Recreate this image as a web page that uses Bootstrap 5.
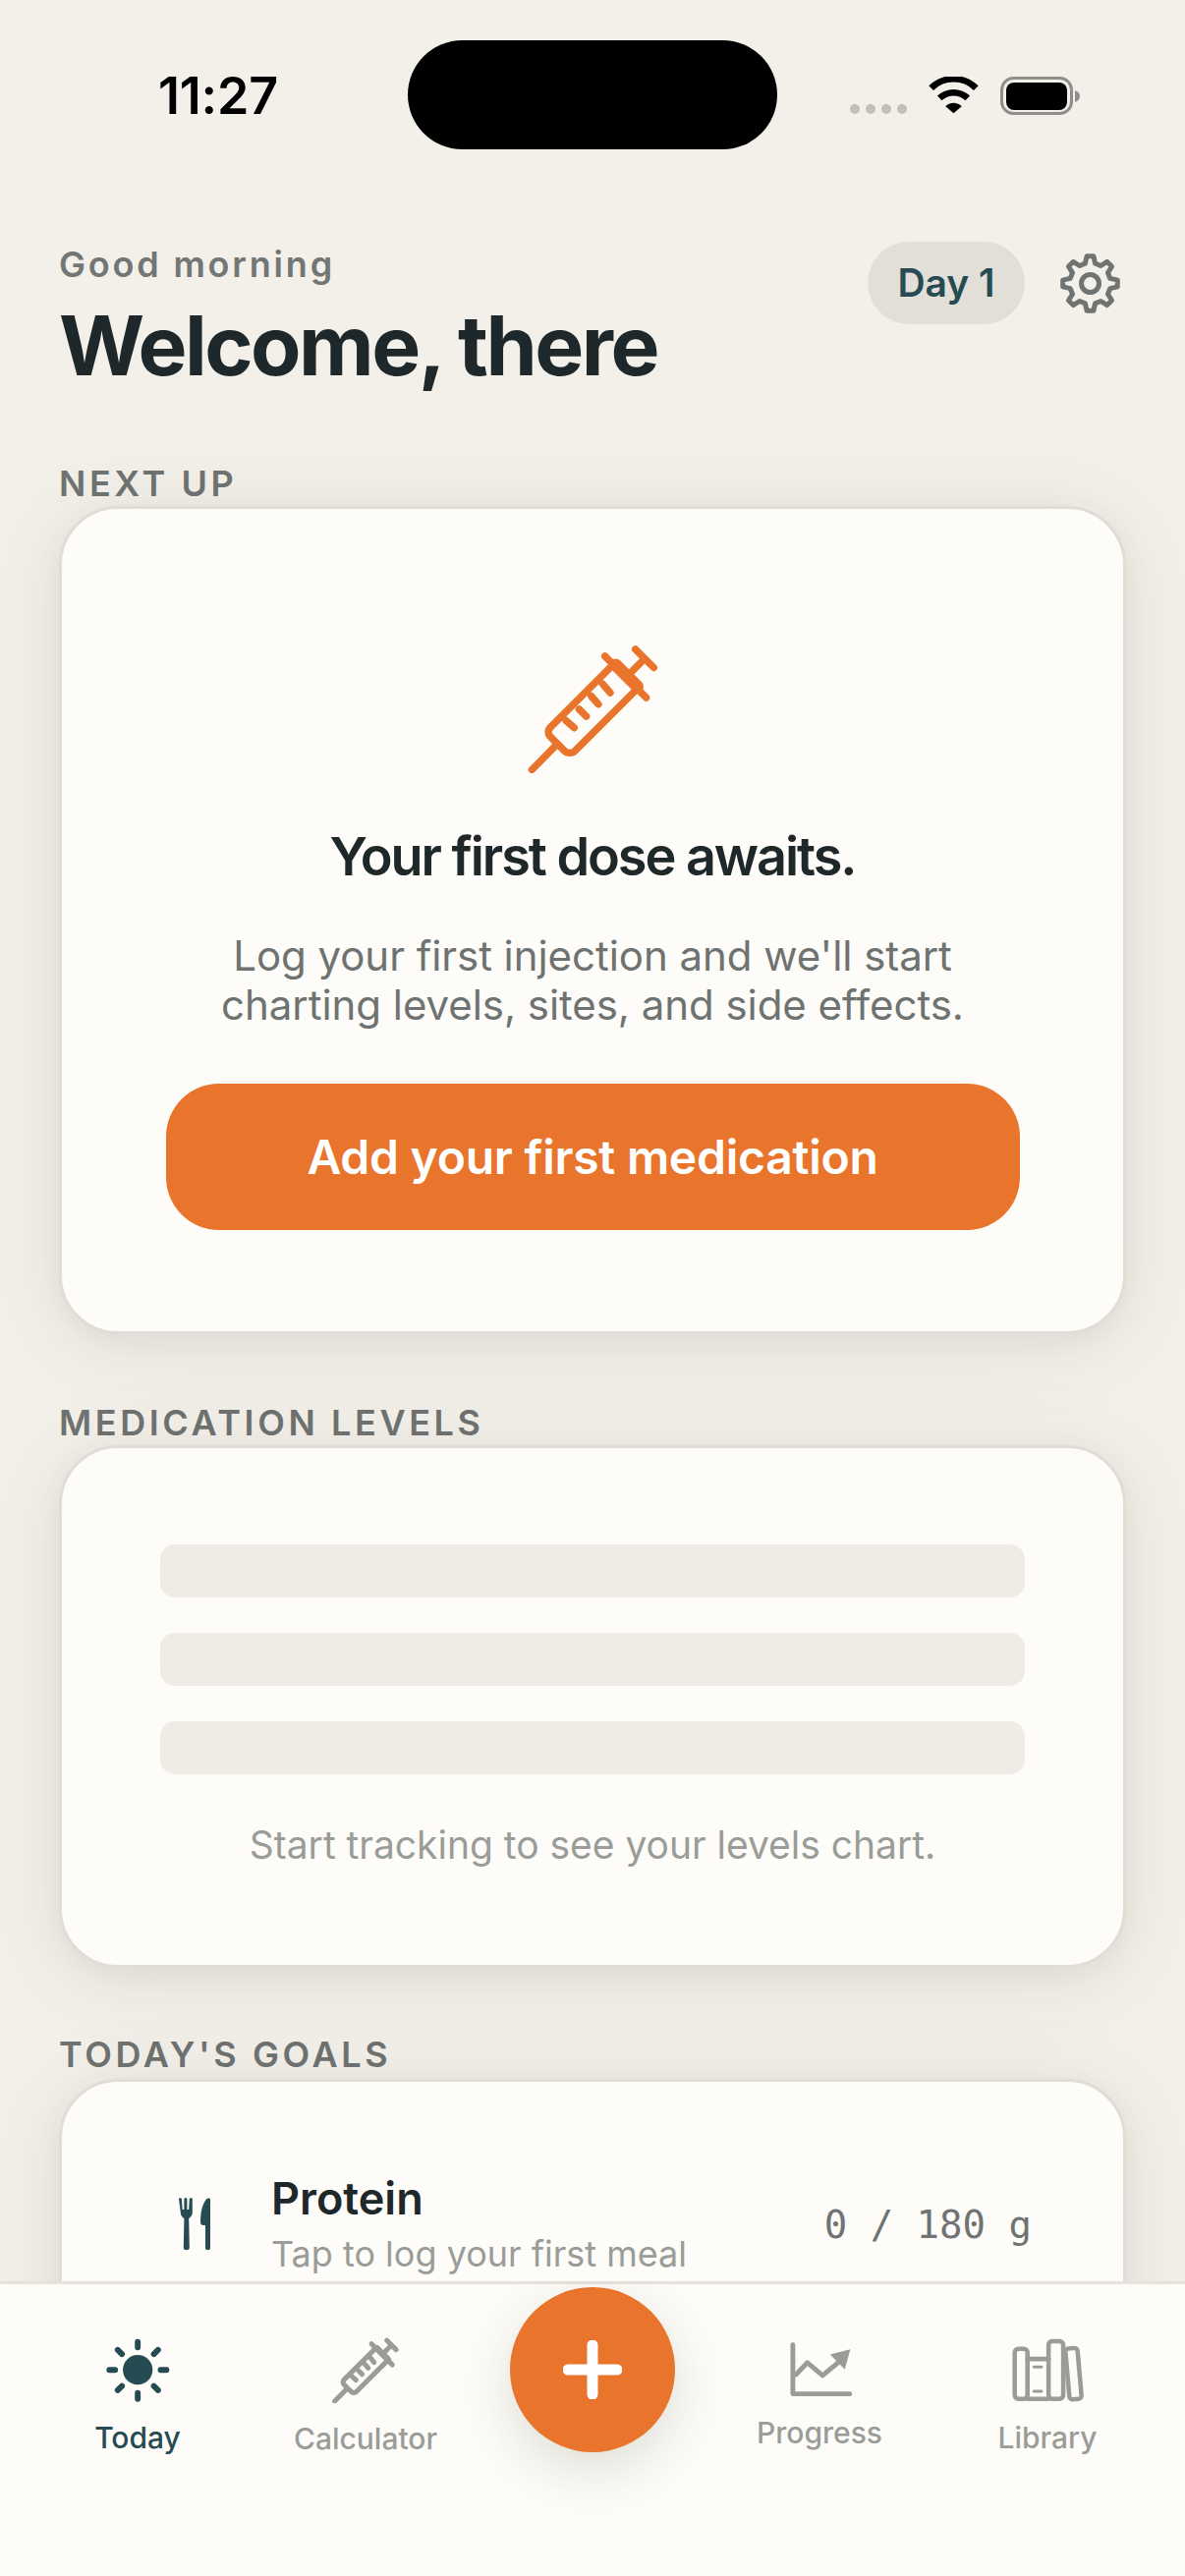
<!DOCTYPE html>
<html lang="en"><head><meta charset="utf-8"><title>Today</title>
<link href="https://cdn.jsdelivr.net/npm/bootstrap@5.3.0/dist/css/bootstrap.min.css" rel="stylesheet">
<script src="https://cdn.jsdelivr.net/npm/bootstrap@5.3.0/dist/js/bootstrap.bundle.min.js"></script>
<style>
html,body{margin:0;background:#f3f0ea;}
body{font-family:Inter,"Liberation Sans",sans-serif;color:#1e2729;}
.shell{width:1206px;height:2622px;overflow:hidden;}
.scroller{height:2322px;overflow:hidden;flex:none;}
.status{height:240px;padding:41px 106px 0 161px;}
.clock{font-size:52px;font-weight:600;line-height:60px;color:#000;margin-top:27px;width:254px;letter-spacing:-.2px;}
.island{width:376px;height:111px;border-radius:56px;background:#000;}
.sig{display:flex;gap:6px;margin:65px 22px 0 74px;}
.sig i{width:10px;height:10px;border-radius:50%;background:#c0c0ba;display:block;}
.wifi{margin:37px 22px 0 0;display:block;}
.batt{margin:37px 0 0 0;}
.head{padding:0 65px 0 60px;height:230px;}
.hello{font-size:36px;line-height:44px;font-weight:600;letter-spacing:.078em;color:#727674;margin-top:7px;}
.title{font-size:84px;line-height:100px;font-weight:700;letter-spacing:-.03em;color:#1e2729;margin:11px 0 0;}
.daypill{height:84px;width:160px;border-radius:42px;background:#e2dfd9;color:#264b52;font-size:39px;font-weight:600;margin-top:6px;}
.gear{margin:17px 0 0 35px;}
.seclabel{font-size:36px;line-height:44px;font-weight:600;letter-spacing:.1em;color:#6f7371;margin:0 60px 1px 60px;}
.seclabel.gap1{margin-top:68px;}
.seclabel.gap2{margin-top:66px;margin-bottom:3px;}
.tile{margin:0 60px;background:#fdfcf8;border:3px solid #e0ddd6;border-radius:60px;box-shadow:0 6px 24px rgba(70,60,35,.05),0 10px 84px rgba(70,60,35,.1);}
.nextcard{height:843px;padding-top:137px;}
.hero{color:#e9742b;stroke-width:22;}
.doseh{font-size:54px;line-height:64px;font-weight:600;letter-spacing:-.038em;margin:53px 0 0;color:#1e2729;}
.dosep{font-size:42px;line-height:50px;letter-spacing:-.05px;color:#6e7270;margin:44px 0 0;}
.cta{display:block;width:869px;height:149px;margin:55px auto 0;border:0;border-radius:54px;background:#e9742b;color:#fff;font-size:48px;font-weight:600;letter-spacing:-.25px;}
.cta:hover{background:#e9742b;color:#fff;}
.levelcard{height:532px;padding:98px 100px 0;}
.skel{height:54px;border-radius:15px;background:#efece5;margin-bottom:36px;}
.levelnote{font-size:39px;line-height:48px;color:#9a9c98;margin:12px 0 0;letter-spacing:-.02px;}
.goalcard{height:400px;padding:92px 93px 0 0;}
.fork{margin-left:119px;width:32px;}
.gname{font-size:45px;line-height:54px;font-weight:600;color:#1e2729;}
.gsub{font-size:36px;line-height:44px;color:#9a9c98;margin-top:7px;}
.gval{font-family:"DejaVu Sans Mono",monospace;font-size:39px;line-height:50px;color:#6f7371;margin-top:2px;}
.tabbar{height:300px;background:#fdfcf8;border-top:3px solid #e6e3dc;}
.tabitem{width:232px;padding-top:52px;height:178px;font-size:30px;line-height:40px;font-weight:500;color:#9a9c98;}
.tabitem.on{color:#264b52;}
.fab{width:168px;height:168px;border-radius:50%;border:0;background:#e9742b;margin:3px 0 0;box-shadow:0 18px 54px rgba(70,60,35,.16);padding:0;flex:none;}
.calc{color:#9a9c98;stroke-width:30;}
</style></head><body>
<svg width="0" height="0" class="d-block" aria-hidden="true"><defs>
<symbol id="syr" viewBox="165 105 405 395">
<g fill="none" stroke="currentColor" stroke-linecap="round" stroke-linejoin="round">
<path d="M181 490 250 420"/>
<path d="M430 168 238 360c-9 9-9 21 0 30l42 42c9 9 24 9 33 0L500 245"/>
<path d="M404 143 530 270"/>
<path d="M437 170 503 236" stroke-width="38"/>
<path d="M488 188 525 151M497 122 553 178"/>
<path d="M285 340 310 362M325 305 347 327M362 265 384 290M397 228 420 255"/>
</g></symbol></defs></svg>
<div class="shell d-flex flex-column">
<div class="scroller">
  <div class="status d-flex align-items-start">
    <div class="clock">11:27</div>
    <div class="island"></div>
    <div class="sig"><i></i><i></i><i></i><i></i></div>
    <svg class="wifi" width="51" height="39" viewBox="315 85 154 117"><path d="M323 120A98 98 0 0 1 461 120" fill="none" stroke="#000" stroke-width="20"/><path d="M349 151A62 62 0 0 1 435 151" fill="none" stroke="#000" stroke-width="20"/><path d="M392 197 367 176A34 34 0 0 1 417 176Z" fill="#000"/></svg>
    <svg class="batt" width="82" height="40" viewBox="0 0 82 40"><rect x="1.5" y="1.5" width="71" height="36" rx="12" fill="none" stroke="#8e8e8c" stroke-width="3"/><rect x="6" y="6" width="62" height="28" rx="8" fill="#000"/><path d="M76 14c3 1 5 3 5 6s-2 5-5 6z" fill="#8e8e8c"/></svg>
  </div>
  <div class="head d-flex justify-content-between align-items-start">
    <div><div class="hello">Good morning</div><h1 class="title">Welcome, there</h1></div>
    <div class="d-flex align-items-start">
      <div class="daypill d-flex align-items-center justify-content-center">Day 1</div>
      <svg class="gear" width="63" height="63" viewBox="-31.5 -31.5 63 63"><g fill="none" stroke="#6f7371" stroke-width="5" stroke-linejoin="round"><path d="M-3.41-27.79 3.41-27.79 5.08-20.38 10.82-18 17.24-22.06 22.06-17.24 18-10.82 20.38-5.08 27.79-3.41 27.79 3.41 20.38 5.08 18 10.82 22.06 17.24 17.24 22.06 10.82 18 5.08 20.38 3.41 27.79-3.41 27.79-5.08 20.38-10.82 18-17.24 22.06-22.06 17.24-18 10.82-20.38 5.08-27.79 3.41-27.79-3.41-20.38-5.08-18-10.82-22.06-17.24-17.24-22.06-10.82-18-5.08-20.38Z"/><circle r="9"/></g></svg>
    </div>
  </div>
  <div class="seclabel">NEXT UP</div>
  <div class="tile card text-center nextcard">
    <svg class="hero mx-auto d-block" width="135" height="132"><use href="#syr"/></svg>
    <h2 class="doseh">Your first dose awaits.</h2>
    <p class="dosep">Log your first injection and we'll start<br>charting levels, sites, and side effects.</p>
    <button class="btn cta" type="button">Add your first medication</button>
  </div>
  <div class="seclabel gap1">MEDICATION LEVELS</div>
  <div class="tile card levelcard text-center">
    <div class="skel"></div><div class="skel"></div><div class="skel"></div>
    <p class="levelnote">Start tracking to see your levels chart.</p>
  </div>
  <div class="seclabel gap2">TODAY'S GOALS</div>
  <div class="tile card goalcard">
    <div class="d-flex align-items-center">
      <svg class="fork" width="32" height="54" viewBox="0 0 32 54"><g fill="#264b52"><path d="M0 1c0-1 2.400-1 2.400 0L3 12h1.500V1c0-1 2.500-1 2.500 0v11h1.500L9 1c0-1 2.500-1 2.500 0V15c0 3-1.500 5-3 6l.5 30c0 3-5 3-5 0l.5-30c-1.500-1-3-3-3-6Z" transform="scale(1.2 1)"/><path d="M32 2c0-2-2.500-2-4-.5C24 6 22 15 22 24c0 3 1 4 3 4h2v23c0 3 5 3 5 0Z"/></g></svg>
      <div class="flex-grow-1" style="margin-left:62px"><div class="gname">Protein</div><div class="gsub">Tap to log your first meal</div></div>
      <div class="gval">0 / 180 g</div>
    </div>
  </div>
</div>
<nav class="tabbar d-flex align-items-start justify-content-between">
  <div class="d-flex ps-4">
  <div class="tabitem on d-flex flex-column align-items-center justify-content-center gap-3">
    <svg width="65" height="65" viewBox="140 118 198 198"><circle cx="238" cy="216" r="46" fill="#264b52"/><g stroke="#264b52" stroke-width="18" stroke-linecap="round"><path d="M238 129v17M238 288v18M150 216h18M309 216h18M176 154l13 13M301 154l-13 13M176 279l13-13M301 279l-13-13"/></g></svg>
    <span>Today</span></div>
  <div class="tabitem d-flex flex-column align-items-center justify-content-center gap-3">
    <svg class="calc" width="68" height="67"><use href="#syr"/></svg>
    <span>Calculator</span></div>
  </div>
  <button class="fab d-flex align-items-center justify-content-center" type="button" aria-label="Add"><svg width="60" height="60" viewBox="0 0 60 60"><path d="M30 5v50M5 30h50" stroke="#fff" stroke-width="11" stroke-linecap="round"/></svg></button>
  <div class="d-flex pe-4">
  <div class="tabitem d-flex flex-column align-items-center justify-content-center gap-3">
    <svg width="65" height="56" viewBox="180 132 198 170"><g fill="none" stroke="#9a9c98" stroke-width="15" stroke-linecap="round" stroke-linejoin="round"><path d="M195 140V292H371"/><path d="M205 232 240 195 287 235 335 195"/></g><path d="M310 170 373 154 356 216Z" fill="#9a9c98"/></svg>
    <span>Progress</span></div>
  <div class="tabitem d-flex flex-column align-items-center justify-content-center gap-3">
    <svg width="77" height="65" viewBox="862 115 228 200"><g fill="none" stroke="#9a9c98" stroke-width="14" stroke-linejoin="round" stroke-linecap="round"><rect x="872" y="148" width="40" height="157" rx="12"/><path d="M912 180H978M912 305H978"/><rect x="978" y="124" width="46" height="181" rx="12"/><rect x="1037" y="146" width="38" height="160" rx="10" transform="rotate(-5 1056 226)"/><path d="M932 205H956M932 281H956" stroke-width="9"/></g></svg>
    <span>Library</span></div>
  </div>
</nav>
</div>
</body></html>
